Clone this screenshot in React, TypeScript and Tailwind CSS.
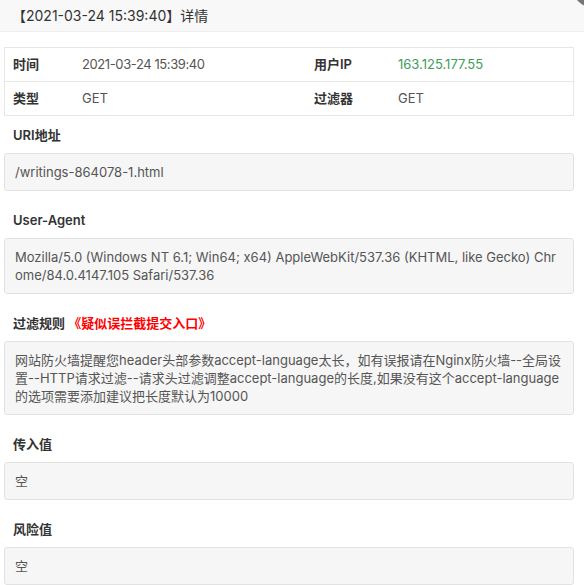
const font = "font-['Inter','Noto_Sans_CJK_SC',sans-serif]";

function Label({ children }: { children: React.ReactNode }) {
  return <div className="h-5 pl-[9px] text-[13px] font-semibold leading-5 text-[#333]">{children}</div>;
}

function Box({ children }: { children: React.ReactNode }) {
  return (
    <div className="mt-2 break-all rounded-[3px] border border-[#e2e2e2] bg-[#f6f6f6] px-[10px] py-[9px] text-[13px] leading-[18px] text-[#555]">
      {children}
    </div>
  );
}

export default function App() {
  return (
    <div className={`relative h-[585px] w-[584px] overflow-hidden bg-white ${font}`}>
      <div className="h-[32px] border-b border-[#eee] bg-[#f8f8f8] pl-3 text-sm leading-[31px] text-[#333]">
        【2021-03-24 15:39:40】详情
      </div>
      <div className="absolute left-[572px] top-[-36px] h-11 w-11 rounded-full bg-[#777]" />

      <div className="pl-1 pr-[10px]">
        <div className="mt-[15px] border border-[#e6e6e6] text-[13px] text-[#555]">
          <div className="grid h-[34px] grid-cols-[69px_232px_84px_1fr] items-center border-b border-[#e6e6e6]">
            <span className="pl-[8px] font-semibold text-[#333]">时间</span>
            <span className="pl-[8px] tracking-[-0.4px]">2021-03-24 15:39:40</span>
            <span className="pl-[8px] font-semibold text-[#333]">用户IP</span>
            <span className="pl-[8px] text-[#3d9e5a]">163.125.177.55</span>
          </div>
          <div className="grid h-[33px] grid-cols-[69px_232px_84px_1fr] items-center">
            <span className="pl-[8px] font-semibold text-[#333]">类型</span>
            <span className="pl-[8px]">GET</span>
            <span className="pl-[8px] font-semibold text-[#333]">过滤器</span>
            <span className="pl-[8px]">GET</span>
          </div>
        </div>

        <div className="mt-[9px]">
          <Label>URI地址</Label>
          <Box>/writings-864078-1.html</Box>
        </div>

        <div className="mt-[19px]">
          <Label>User-Agent</Label>
          <Box>
            Mozilla/5.0 (Windows NT 6.1; Win64; x64) AppleWebKit/537.36 (KHTML, like Gecko) Chrome/84.0.4147.105 Safari/537.36
          </Box>
        </div>

        <div className="mt-[19px]">
          <Label>
            过滤规则 <span className="text-[#ff0000]">《疑似误拦截提交入口》</span>
          </Label>
          <Box>
            网站防火墙提醒您header头部参数accept-language太长，如有误报请在Nginx防火墙--全局设置--HTTP请求过滤--请求头过滤调整accept-language的长度,如果没有这个accept-language的选项需要添加建议把长度默认为10000
          </Box>
        </div>

        <div className="mt-[19px]">
          <Label>传入值</Label>
          <Box>空</Box>
        </div>

        <div className="mt-[19px]">
          <Label>风险值</Label>
          <Box>空</Box>
        </div>
      </div>
    </div>
  );
}
